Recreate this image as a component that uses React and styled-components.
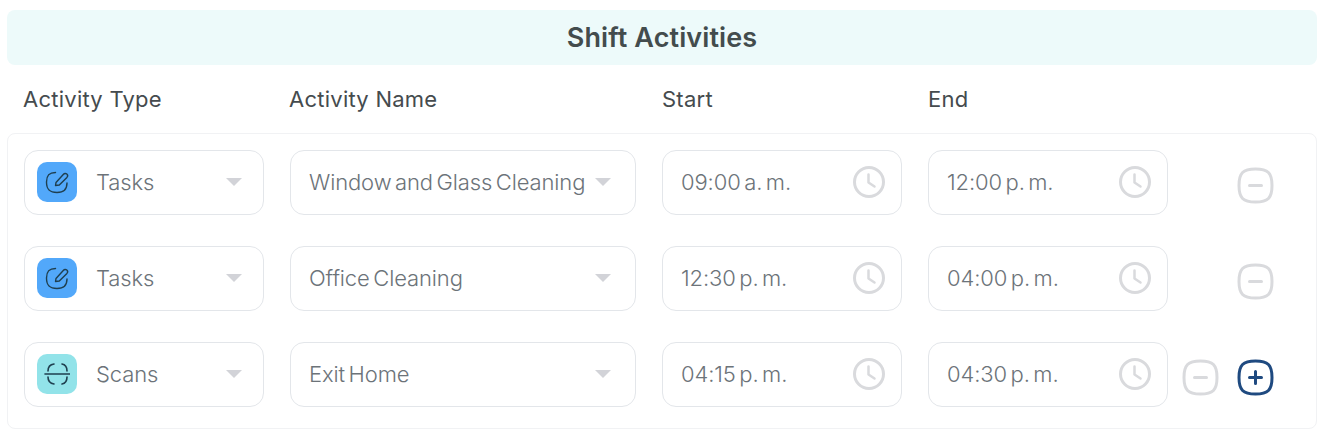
import styled, { createGlobalStyle } from "styled-components"

const GlobalStyle = createGlobalStyle`
  body {
    margin: 0;
    background: #FFF;
    font-family: Inter, "Noto Sans", sans-serif;
  }
`

const Page = styled.div`
  width: 1324px;
  height: 434px;
  box-sizing: border-box;
  padding: 10px 7px 0;
  overflow: hidden;
`

const Header = styled.h2`
  margin: 0;
  height: 55px;
  display: flex;
  align-items: center;
  justify-content: center;
  background-color: #EDFAFA;
  border-radius: 8px;
  color: #434C4D;
  font-size: 27px;
  font-weight: 600;
  letter-spacing: 0.1px;
`

const Labels = styled.div`
  display: grid;
  grid-template-columns: 240px 347px 240px 240px;
  column-gap: 26px;
  height: 68px;
  padding: 0 16px;
  align-items: center;
  color: #454B4E;
  font-size: 22px;
  letter-spacing: 0.25px;
`

const Card = styled.div`
  border: 1px solid #F1F2F4;
  border-radius: 8px;
  padding: 16px 16px 21px;
  display: flex;
  flex-direction: column;
  gap: 31px;
`

const Row = styled.div`
  display: grid;
  grid-template-columns: 240px 346px 240px 240px 1fr;
  column-gap: 26px;
`

const Field = styled.div`
  height: 65px;
  box-sizing: border-box;
  border: 1px solid #E3E6EA;
  border-radius: 14px;
  display: flex;
  align-items: center;
  padding: ${props => props.$padding};
  color: #6C7379;
  font-size: 22px;
  font-weight: 300;
  letter-spacing: -0.12px;
  word-spacing: -2.5px;
  white-space: nowrap;
`

const Tile = styled.div`
  width: 40px;
  height: 40px;
  flex: none;
  border-radius: 10px;
  background-color: ${props => props.$color};
  display: flex;
  align-items: center;
  justify-content: center;
  margin-right: 19px;
`

const Value = styled.span`
  flex: 1;
  margin-top: -1px;
`

const Caret = styled.span`
  flex: none;
  width: 0;
  height: 0;
  border-left: 8px solid transparent;
  border-right: 8px solid transparent;
  border-top: 8px solid #D2D3D8;
`

const Actions = styled.div`
  width: 92px;
  display: flex;
  justify-content: flex-end;
  align-items: center;
  gap: 18px;
  margin: 6px 0 0 -12px;
`

const RoundButton = styled.button`
  width: 37px;
  height: 37px;
  padding: 0;
  border: none;
  background: none;
  display: block;
  cursor: pointer;
`

const TaskIcon = () => (
  <svg width="26" height="26" viewBox="0 0 26 26" fill="none" stroke="#1F3F4F" strokeWidth="1.4" strokeLinecap="round" strokeLinejoin="round">
    <path d="M11.5 3.5C5 3.5 2.5 6.5 2.5 13C2.5 20.5 5.5 23.5 13 23.5C20 23.5 23 20.5 23 14" />
    <path d="M11.5 16.5L12 13.5L19.5 5.3C20.4 4.3 21.8 4.2 22.8 5.1C23.8 6 23.8 7.4 22.9 8.4L15.3 16Z" />
  </svg>
)

const ScanIcon = () => (
  <svg width="26" height="26" viewBox="0 0 26 26" fill="none" stroke="#1F3F4F" strokeWidth="1.6" strokeLinecap="round">
    <path d="M1 13H25.5" />
    <path d="M4 10C4 6 6 3.5 10 3" />
    <path d="M18 3C21 3.5 23 6 23 10" />
    <path d="M4 16C4 20 6 22.5 10 23" />
    <path d="M18 23C21 22.5 23 20 23 16" />
  </svg>
)

const ClockIcon = () => (
  <svg width="32" height="32" viewBox="0 0 32 32" fill="none" stroke="#D9DADD" strokeWidth="3" strokeLinecap="round" strokeLinejoin="round">
    <circle cx="16" cy="16" r="14.5" />
    <path d="M15.5 8.5V16.5L21.5 20.5" strokeWidth="2.5" />
  </svg>
)

const MinusIcon = () => (
  <svg width="37" height="37" viewBox="0 0 37 37" fill="none" stroke="#D9DADD" strokeWidth="3" strokeLinecap="round">
    <path d="M18.5 2C6 2 2 6 2 18.5C2 31 6 35 18.5 35C31 35 35 31 35 18.5C35 6 31 2 18.5 2Z" />
    <path d="M12.5 18.5H24.5" />
  </svg>
)

const PlusIcon = () => (
  <svg width="37" height="37" viewBox="0 0 37 37" fill="none" stroke="#1F4A80" strokeWidth="3" strokeLinecap="round">
    <path d="M18.5 2C6 2 2 6 2 18.5C2 31 6 35 18.5 35C31 35 35 31 35 18.5C35 6 31 2 18.5 2Z" />
    <path d="M12.5 18.5H24.5M18.5 12.5V24.5" />
  </svg>
)

const rows = [
  { type: "Tasks", name: "Window and Glass Cleaning", start: "09:00 a. m.", end: "12:00 p. m." },
  { type: "Tasks", name: "Office Cleaning", start: "12:30 p. m.", end: "04:00 p. m." },
  { type: "Scans", name: "Exit Home", start: "04:15 p. m.", end: "04:30 p. m.", last: true },
]

export default function App() {
  return (
    <Page>
      <GlobalStyle />
      <Header>Shift Activities</Header>
      <Labels>
        <span>Activity Type</span>
        <span>Activity Name</span>
        <span>Start</span>
        <span>End</span>
      </Labels>
      <Card>
        {rows.map(row => (
          <Row key={row.name}>
            <Field $padding="0 21px 1px 12px">
              <Tile $color={row.type === "Tasks" ? "#52A8FA" : "#92E3E9"}>
                {row.type === "Tasks" ? <TaskIcon /> : <ScanIcon />}
              </Tile>
              <Value>{row.type}</Value>
              <Caret />
            </Field>
            <Field $padding="0 24px 1px 18px">
              <Value>{row.name}</Value>
              <Caret />
            </Field>
            <Field $padding="0 16px 1px 18px">
              <Value>{row.start}</Value>
              <ClockIcon />
            </Field>
            <Field $padding="0 16px 1px 18px">
              <Value>{row.end}</Value>
              <ClockIcon />
            </Field>
            <Actions>
              <RoundButton aria-label="Remove"><MinusIcon /></RoundButton>
              {row.last && <RoundButton aria-label="Add"><PlusIcon /></RoundButton>}
            </Actions>
          </Row>
        ))}
      </Card>
    </Page>
  )
}
